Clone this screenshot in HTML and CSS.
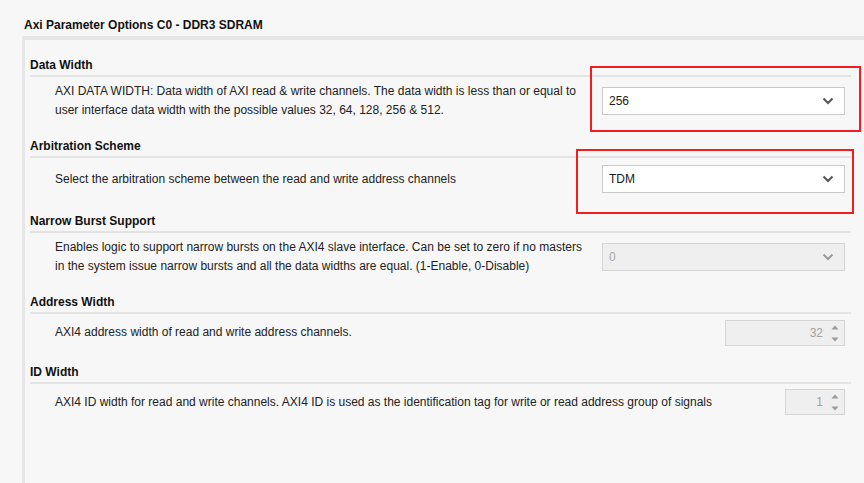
FILE: index.html
```html
<!DOCTYPE html>
<html lang="en">
<head>
<meta charset="utf-8">
<title>Axi Parameter Options</title>
<link rel="stylesheet" href="styles.css">
</head>
<body>
<div class="page">
  <h1 class="title">Axi Parameter Options C0 - DDR3 SDRAM</h1>
  <div class="panel">
    <section class="param">
      <div class="param-head">Data Width</div>
      <div class="param-body">
        <p class="desc">AXI DATA WIDTH: Data width of AXI read &amp; write channels. The data width is less than or equal to<br>user interface data width with the possible values 32, 64, 128, 256 &amp; 512.</p>
        <div class="select">
          <span class="value">256</span>
          <svg class="chev" width="12" height="8" viewBox="0 0 12 8"><path d="M1.5 1.5 L6 6 L10.5 1.5" fill="none" stroke="currentColor" stroke-width="2"/></svg>
        </div>
      </div>
    </section>
    <section class="param">
      <div class="param-head">Arbitration Scheme</div>
      <div class="param-body">
        <p class="desc">Select the arbitration scheme between the read and write address channels</p>
        <div class="select">
          <span class="value">TDM</span>
          <svg class="chev" width="12" height="8" viewBox="0 0 12 8"><path d="M1.5 1.5 L6 6 L10.5 1.5" fill="none" stroke="currentColor" stroke-width="2"/></svg>
        </div>
      </div>
    </section>
    <section class="param">
      <div class="param-head">Narrow Burst Support</div>
      <div class="param-body">
        <p class="desc">Enables logic to support narrow bursts on the AXI4 slave interface. Can be set to zero if no masters<br>in the system issue narrow bursts and all the data widths are equal. (1-Enable, 0-Disable)</p>
        <div class="select disabled">
          <span class="value">0</span>
          <svg class="chev" width="12" height="8" viewBox="0 0 12 8"><path d="M1.5 1.5 L6 6 L10.5 1.5" fill="none" stroke="currentColor" stroke-width="2"/></svg>
        </div>
      </div>
    </section>
    <section class="param">
      <div class="param-head">Address Width</div>
      <div class="param-body">
        <p class="desc">AXI4 address width of read and write address channels.</p>
        <div class="spinner spinner-wide">
          <span class="value">32</span>
          <span class="arrows">
            <svg width="8" height="5" viewBox="0 0 8 5"><path d="M0.5 4.5 L4 0.5 L7.5 4.5 Z" fill="currentColor"/></svg>
            <svg width="8" height="5" viewBox="0 0 8 5"><path d="M0.5 0.5 L4 4.5 L7.5 0.5 Z" fill="currentColor"/></svg>
          </span>
        </div>
      </div>
    </section>
    <section class="param">
      <div class="param-head">ID Width</div>
      <div class="param-body">
        <p class="desc">AXI4 ID width for read and write channels. AXI4 ID is used as the identification tag for write or read address group of signals</p>
        <div class="spinner spinner-narrow">
          <span class="value">1</span>
          <span class="arrows">
            <svg width="8" height="5" viewBox="0 0 8 5"><path d="M0.5 4.5 L4 0.5 L7.5 4.5 Z" fill="currentColor"/></svg>
            <svg width="8" height="5" viewBox="0 0 8 5"><path d="M0.5 0.5 L4 4.5 L7.5 0.5 Z" fill="currentColor"/></svg>
          </span>
        </div>
      </div>
    </section>
  </div>
  <div class="highlight hl-width"></div>
  <div class="highlight hl-arb"></div>
</div>
</body>
</html>
```

FILE: styles.css
```css
html, body {
  margin: 0;
  padding: 0;
  background: #f7f7f7;
}

body {
  font-family: "Liberation Sans", Arial, sans-serif;
  font-size: 12px;
  color: #1e1e1e;
  overflow: hidden;
}

.page {
  position: relative;
  width: 864px;
  height: 483px;
  padding: 18px 0 0 22px;
  box-sizing: border-box;
}

.title {
  margin: 0;
  padding-left: 2px;
  font-size: 12px;
  line-height: 15px;
  font-weight: bold;
  color: #111;
}

.panel {
  margin-top: 3px;
  border-top: 4px solid #e6e6e6;
  border-left: 3px solid #e6e6e6;
  padding: 18px 13px 0 5px;
  height: 460px;
  box-sizing: border-box;
}

.param-head {
  font-weight: bold;
  line-height: 15px;
  padding-bottom: 2px;
  border-bottom: 2px solid #e3e3e3;
  color: #111;
}

.param-body {
  display: flex;
  align-items: center;
  padding: 5px 6px 19px 25px;
}

.desc {
  flex: 1;
  margin: 0;
  line-height: 19px;
  color: #222;
}

.select {
  width: 243px;
  height: 28px;
  margin: 2px 0;
  box-sizing: border-box;
  border: 1px solid #cacaca;
  background: #fff;
  display: flex;
  align-items: center;
  justify-content: space-between;
  padding: 0 10px 0 6px;
  color: #1a1a1a;
}

.select .chev {
  color: #555;
}

.select.disabled {
  background: #efefef;
  border-color: #d6d6d6;
  color: #a8a8a8;
}

.select.disabled .chev {
  color: #9a9a9a;
}

.spinner {
  height: 26px;
  box-sizing: border-box;
  border: 1px solid #d4d4d4;
  background: #efefef;
  display: flex;
  align-items: center;
  justify-content: flex-end;
  padding-right: 5px;
  color: #a0a0a0;
}

.spinner-wide {
  width: 120px;
  margin-top: 1px;
}

.spinner-narrow {
  width: 60px;
}

.spinner .value {
  margin-right: 8px;
}

.spinner .arrows {
  display: flex;
  flex-direction: column;
  gap: 7px;
  color: #9a9a9a;
}

.spinner .arrows svg {
  display: block;
}

.highlight {
  position: absolute;
  border: 2px solid #f21d1d;
  box-sizing: border-box;
}

.hl-width {
  left: 590px;
  top: 66px;
  width: 271px;
  height: 66px;
}

.hl-arb {
  left: 576px;
  top: 149px;
  width: 278px;
  height: 65px;
}
```
